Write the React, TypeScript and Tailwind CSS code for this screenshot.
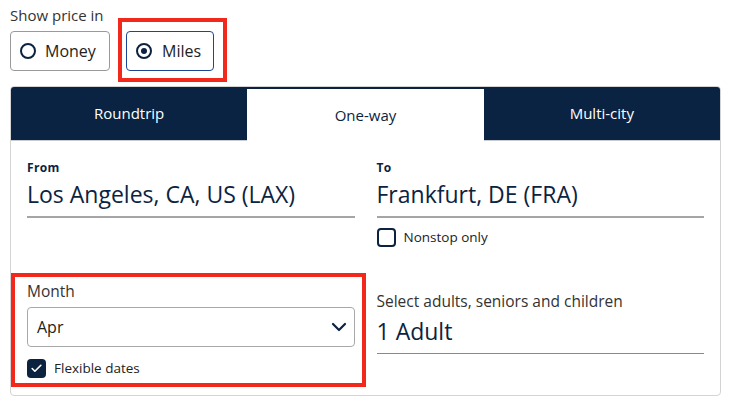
import { ChevronDown, Check } from 'lucide-react';

const tabs = [
  { label: 'Roundtrip', active: false },
  { label: 'One-way', active: true },
  { label: 'Multi-city', active: false },
];

export default function App() {
  return (
    <div className="w-[732px] h-[407px] bg-white [font-family:'Open_Sans',sans-serif] font-normal text-[#0c2340] pl-[10px] pt-[5px]">
      {/* Show price in */}
      <div className="text-[15px] leading-[20px] text-[#333]">Show price in</div>
      <div className="flex gap-4 mt-[6px]">
        <button className="w-[100px] h-[40px] flex items-center gap-[9px] pl-[9px] border border-[#9a9a9a] rounded-[4px] text-[16px] text-[#222]">
          <span className="w-[16px] h-[16px] rounded-full border-2 border-[#0c2340]" />
          Money
        </button>
        <div className="relative">
          <button className="w-[88px] h-[40px] flex items-center gap-[10px] pl-[9px] border-[1.5px] border-[#1d4593] rounded-[4px] text-[16px] text-[#222]">
            <span className="w-[16px] h-[16px] rounded-full border-2 border-[#0c2340] flex items-center justify-center">
              <span className="w-[6px] h-[6px] rounded-full bg-[#0c2340]" />
            </span>
            Miles
          </button>
          <span className="absolute -left-[8px] -right-[13px] -top-[13px] -bottom-[11px] border-4 border-[#f2281c] pointer-events-none" />
        </div>
      </div>

      {/* Card */}
      <div className="w-[711px] mt-[15px] border border-[#d4d4d4] rounded-[4px] overflow-hidden">
        <div className="grid grid-cols-3 h-[54px]">
          {tabs.map((tab) => (
            <div
              key={tab.label}
              className={`flex items-center justify-center text-[15px] font-normal ${
                tab.active
                  ? 'bg-white border-t-2 border-[#0c2340] text-[#0c2340]'
                  : 'bg-[#0a2342] text-white border-b border-[#c8ccd2]'
              }`}
            >
              {tab.label}
            </div>
          ))}
        </div>

        <div className="grid grid-cols-2 gap-x-[22px] px-4 pt-[19px] pb-[16px]">
          {/* From */}
          <div>
            <div className="text-[12px] leading-[16px] font-bold tracking-[0.03em]">From</div>
            <div className="mt-[3px] text-[23px] leading-[30px] pb-[7px] border-b-2 border-[#a5a5a5]">
              Los Angeles, CA, US (LAX)
            </div>
          </div>

          {/* To */}
          <div>
            <div className="text-[12px] leading-[16px] font-bold tracking-[0.03em]">To</div>
            <div className="mt-[3px] text-[23px] leading-[30px] pb-[7px] border-b-2 border-[#a5a5a5]">
              Frankfurt, DE (FRA)
            </div>
            <label className="flex items-center gap-[8px] mt-[9px]">
              <span className="w-[19px] h-[19px] rounded-[4px] border-2 border-[#0c2340]" />
              <span className="text-[13.5px] text-[#222]">Nonstop only</span>
            </label>
          </div>

          {/* Month */}
          <div className="relative mt-[34px]">
            <div className="text-[15.5px] leading-[20px] text-[#333]">Month</div>
            <div className="mt-[6px] h-[40px] flex items-center justify-between pl-[9px] pr-[3px] border border-[#a8a8a8] rounded-[4px]">
              <span className="text-[16px] text-[#222]">Apr</span>
              <ChevronDown size={24} strokeWidth={2.2} className="text-[#0c2340]" />
            </div>
            <label className="flex items-center gap-[8px] mt-[11px]">
              <span className="w-[19px] h-[19px] rounded-[4px] bg-[#0c2340] flex items-center justify-center">
                <Check size={13} strokeWidth={3} className="text-white" />
              </span>
              <span className="text-[13.5px] text-[#222]">Flexible dates</span>
            </label>
            <span className="absolute -left-[16px] -right-[11px] -top-[8px] -bottom-[8px] border-4 border-[#f2281c] pointer-events-none" />
          </div>

          {/* Passengers */}
          <div className="mt-[44px]">
            <div className="text-[15.5px] leading-[20px] text-[#333]">Select adults, seniors and children</div>
            <div className="mt-[5px] text-[23px] leading-[30px] pb-[7px] border-b border-[#8a8a8a]">1 Adult</div>
          </div>
        </div>
      </div>
    </div>
  );
}
